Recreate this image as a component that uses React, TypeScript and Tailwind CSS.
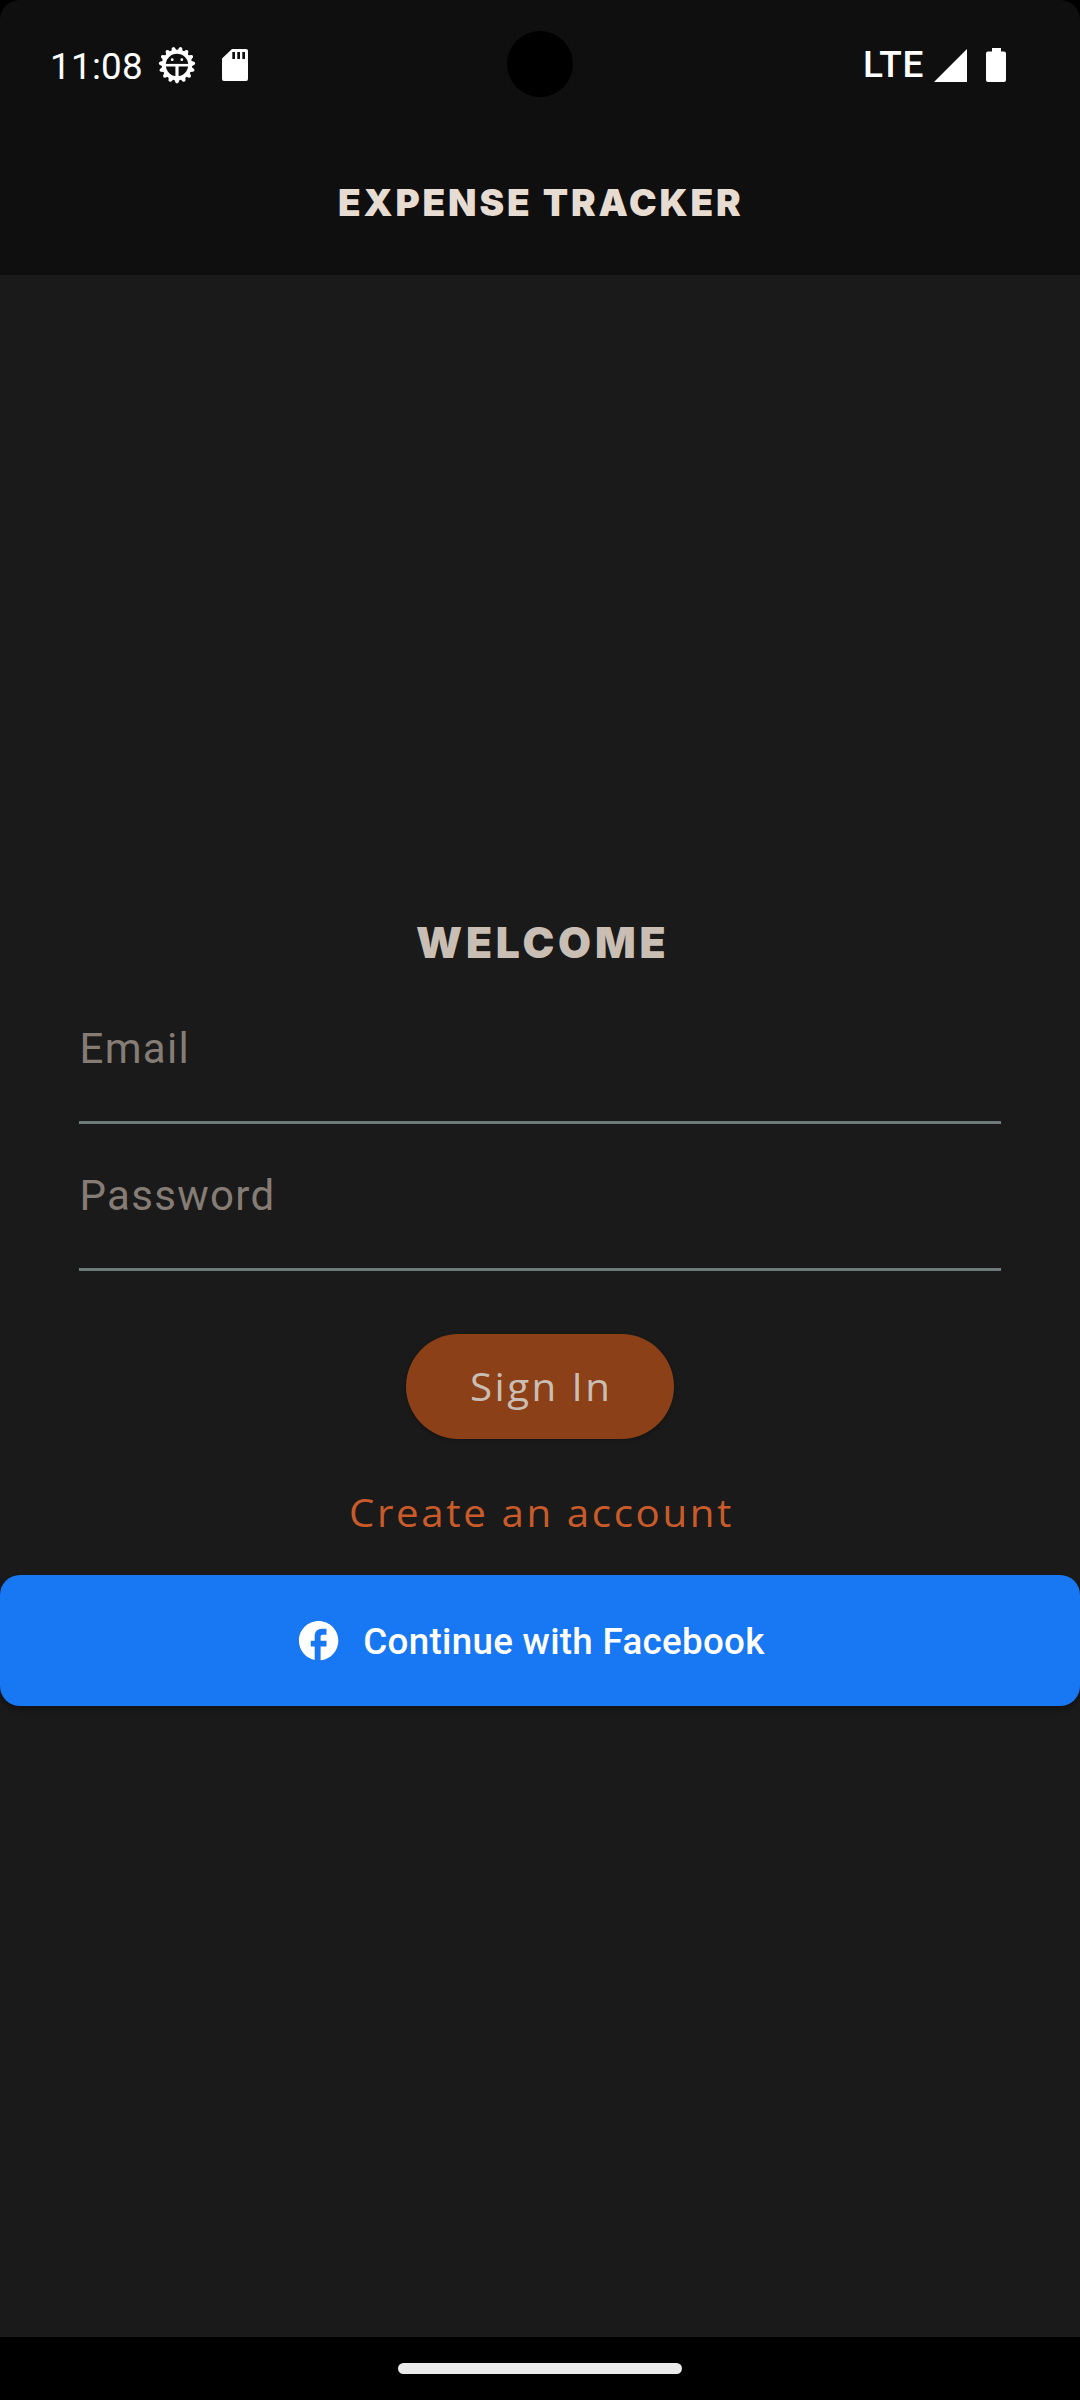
import React from 'react';

const gearTeeth = Array.from({ length: 15 }, (_, i) => i * 24);

function DebugIcon() {
  return (
    <svg className="h-[42px] w-[42px]" viewBox="-21 -21 42 42" fill="none" stroke="white">
      <circle r="13.2" strokeWidth="4" />
      {gearTeeth.map((a) => (
        <path key={a} d="M-3.1 13.5 L-1.5 17.4 Q0 19.2 1.5 17.4 L3.1 13.5 Z" fill="white" stroke="none" transform={`rotate(${a})`} />
      ))}
      <path d="M-12 0.2H12" strokeWidth="2.6" />
      <path d="M0 0V13" strokeWidth="3.2" />
      <circle cx="-4.8" cy="-5.3" r="1.4" fill="white" stroke="none" />
      <circle cx="4.8" cy="-5.3" r="1.4" fill="white" stroke="none" />
    </svg>
  );
}

function SdCardIcon() {
  return (
    <svg className="ml-6 h-8 w-[26px]" viewBox="0 0 26 32" fill="white" fillRule="evenodd">
      <path d="M10 0H24Q26 0 26 2V30Q26 32 24 32H2Q0 32 0 30V9.5Z M10.3 3V10H13V3Z M15.3 3V10H18V3Z M20.3 3V10H23V3Z" />
    </svg>
  );
}

function StatusBar() {
  return (
    <div className="relative flex h-[130px] items-center pr-[74px] pl-[50px] font-[Roboto] text-white">
      <span className="w-[106px] pt-[3px] text-[36.75px] leading-[50px] tracking-[0.3px]">11:08</span>
      <DebugIcon />
      <SdCardIcon />
      <div className="absolute top-[31px] left-[507px] h-[66px] w-[66px] rounded-full bg-black" />
      <span className="ml-auto text-[37px] leading-[50px] font-[490] tracking-[0.7px]">LTE</span>
      <svg className="mr-[19px] ml-[10px] h-[33px] w-[33px]" viewBox="0 0 33 33" fill="white">
        <path d="M33 0V33H0Z" />
      </svg>
      <svg className="h-[34px] w-5" viewBox="0 0 20 34" fill="white">
        <path d="M6 0H15V3.5H18Q20 3.5 20 5.5V32Q20 34 18 34H2Q0 34 0 32V5.5Q0 3.5 2 3.5H6Z" />
      </svg>
    </div>
  );
}

function Field({ label }: { label: string }) {
  return (
    <div className="mx-[79px] h-[147px] border-b-[3px] border-[#6f7b7a] pt-[47px] pl-[0.5px] font-[Roboto] text-[42px] leading-[50px] tracking-[1.3px] text-[#857d75]">
      {label}
    </div>
  );
}

export default function App() {
  return (
    <div className="h-[2400px] w-[1080px] overflow-hidden bg-black">
      <header className="h-[275px] rounded-t-[20px] bg-[#0f0f0f]">
        <StatusBar />
        <h1 className="mt-[46px] pl-[338px] font-[Inter] text-[37px] leading-[54px] font-black tracking-[2.85px] whitespace-nowrap text-[#e6dcd2]">
          EXPENSE TRACKER
        </h1>
      </header>
      <main className="flex h-[2062px] flex-col bg-[#1a1a1a] pt-[638px]">
        <h2 className="mb-[4px] pl-[416px] font-[Inter] text-[42.6px] leading-[60px] font-black tracking-[3.8px] text-[#c9beb4]">
          WELCOME
        </h2>
        <Field label="Email" />
        <Field label="Password" />
        <button className="mt-[63px] ml-[406px] h-[105px] w-[268px] rounded-full bg-[#8c4018] pb-[2px] pl-[64px] text-left font-['Open_Sans'] text-[38px] leading-[56px] font-medium tracking-[2.3px] text-[#c9beb4] shadow-[0_2px_4px_rgba(0,0,0,0.25)]">
          <span className="inline-block origin-left scale-x-106">Sign In</span>
        </button>
        <button className="mt-[45px] pl-[349px] text-left font-['Open_Sans'] text-[38px] leading-[56px] font-medium tracking-[2.45px] whitespace-nowrap text-[#c95b2a]">
          <span className="inline-block origin-left scale-x-106">Create an account</span>
        </button>
        <button className="mt-[35px] flex h-[131px] w-full items-center rounded-[20px] bg-[#1877f2] pl-[295px] text-white shadow-[0_4px_6px_rgba(0,0,0,0.3)]">
          <svg className="h-[47.25px] w-[47.25px]" viewBox="0 0 24 24" fill="currentColor">
            <path d="M22 12c0-5.52-4.48-10-10-10S2 6.48 2 12c0 4.84 3.44 8.87 8 9.8V15H8v-3h2V9.5C10 7.57 11.57 6 13.5 6H16v3h-2c-.55 0-1 .45-1 1v2h3v3h-3v6.95c5.05-.5 9-4.76 9-9.95z" />
          </svg>
          <span className="ml-[21px] pt-[2px] font-[Roboto] text-[36.75px] leading-[50px] font-[490] tracking-[0.3px] whitespace-nowrap">
            Continue with Facebook
          </span>
        </button>
      </main>
      <footer className="flex h-[63px] justify-center pt-[26px]">
        <div className="h-[11px] w-[284px] rounded-full bg-[#ebebeb]" />
      </footer>
    </div>
  );
}
